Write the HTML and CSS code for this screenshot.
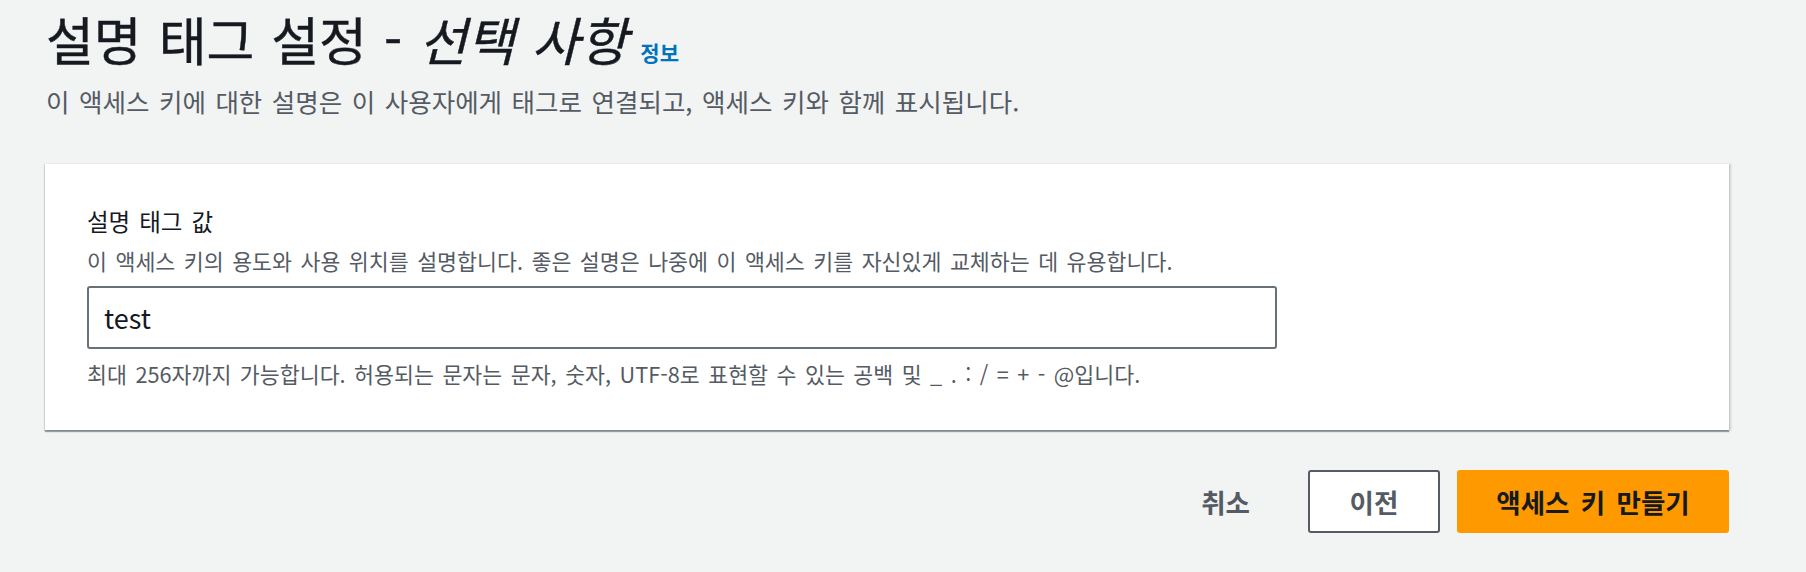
FILE: index.html
```html
<!DOCTYPE html>
<html lang="ko">
<head>
<meta charset="utf-8">
<title>설명 태그 설정</title>
<link rel="stylesheet" href="styles.css">
</head>
<body>
<div class="page">
  <header class="head">
    <h1 class="title">설명 태그 설정 - <span class="opt">선택 사항</span><a class="info" href="#">정보</a></h1>
    <p class="desc">이 액세스 키에 대한 설명은 이 사용자에게 태그로 연결되고, 액세스 키와 함께 표시됩니다.</p>
  </header>
  <section class="card">
    <div class="label">설명 태그 값</div>
    <p class="hint">이 액세스 키의 용도와 사용 위치를 설명합니다. 좋은 설명은 나중에 이 액세스 키를 자신있게 교체하는 데 유용합니다.</p>
    <input class="field" type="text" value="test">
    <p class="constraint">최대 256자까지 가능합니다. 허용되는 문자는 문자, 숫자, UTF-8로 표현할 수 있는 공백 및 _ . : / = + - @입니다.</p>
  </section>
  <div class="actions">
    <button class="btn btn-link">취소</button>
    <button class="btn btn-normal">이전</button>
    <button class="btn btn-primary">액세스 키 만들기</button>
  </div>
</div>
</body>
</html>
```

FILE: styles.css
```css
* { box-sizing: border-box; }
html, body { margin: 0; padding: 0; }
body {
  background: #f2f3f3;
  font-family: "Noto Sans CJK KR", "Noto Sans", sans-serif;
  color: #16191f;
  word-spacing: 0.15em;
}
.page {
  padding: 7px 77px 0 45px;
}
.head {
  padding-left: 1px;
}
.title {
  margin: 0;
  font-size: 52px;
  line-height: 64px;
  font-weight: 400;
  color: #16191f;
  -webkit-text-stroke: 0.4px #16191f;
}
.opt { font-style: italic; }
.info {
  margin-left: 13px;
  font-size: 21px;
  font-weight: 700;
  color: #0073bb;
  text-decoration: none;
  word-spacing: 0;
  -webkit-text-stroke: 0;
}
.desc {
  margin: 0;
  font-size: 25.5px;
  line-height: 34px;
  color: #545b64;
}
.card {
  margin-top: 45px;
  background: #fff;
  border-top: 1px solid #eaeded;
  box-shadow: 0 2px 1px 0 rgba(0, 28, 36, 0.35), 2px 1px 2px 0 rgba(0, 28, 36, 0.15), -1px 1px 1px 0 rgba(0, 28, 36, 0.1);
  padding: 40px 42px 41px 42px;
  display: flex;
  flex-direction: column;
  align-items: flex-start;
}
.label {
  font-size: 23.5px;
  line-height: 34px;
  color: #16191f;
}
.hint {
  margin: 8px 0 0;
  font-size: 21.7px;
  line-height: 30px;
  color: #545b64;
}
.field {
  margin-top: 10px;
  width: 1190px;
  height: 63px;
  border: 2px solid #687078;
  border-radius: 3px;
  padding: 0 0 0 15px;
  font-family: "Noto Sans CJK KR", "Noto Sans", sans-serif;
  font-size: 27px;
  font-weight: 400;
  color: #16191f;
  background: #fff;
  outline: none;
}
.constraint {
  margin: 10px 0 0;
  font-size: 21.7px;
  line-height: 30px;
  color: #545b64;
}
.actions {
  margin-top: 40px;
  display: flex;
  justify-content: flex-end;
  align-items: center;
  gap: 17px;
}
.btn {
  height: 63px;
  font-family: "Noto Sans CJK KR", "Noto Sans", sans-serif;
  font-size: 26.5px;
  font-weight: 700;
  border-radius: 3px;
  cursor: pointer;
  word-spacing: 0.15em;
}
.btn-link {
  background: transparent;
  border: none;
  color: #545b64;
  padding: 0 22px;
  margin-right: 19px;
}
.btn-normal {
  width: 132px;
  background: #fff;
  border: 2px solid #545b64;
  color: #545b64;
}
.btn-primary {
  width: 272px;
  background: #ff9900;
  border: 2px solid #ff9900;
  color: #16191f;
}
```
